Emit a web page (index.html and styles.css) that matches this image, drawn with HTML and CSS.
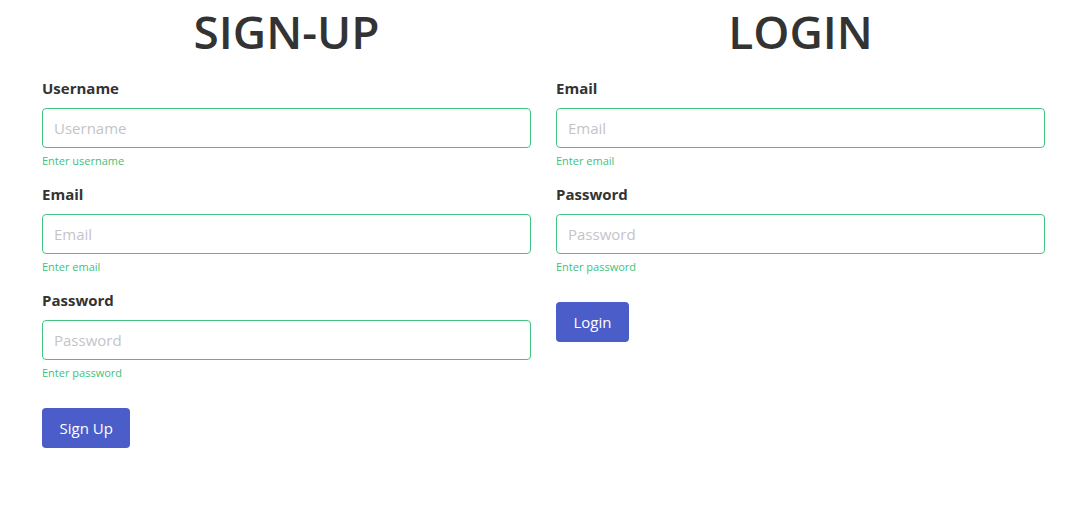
FILE: index.html
```html
<!DOCTYPE html>
<html lang="en">
<head>
<meta charset="utf-8">
<title>Sign-up / Login</title>
<link rel="stylesheet" href="styles.css">
</head>
<body>
<main class="page">
  <section class="panel">
    <h1 class="title">SIGN-UP</h1>
    <form class="form">
      <div class="group">
        <label class="label">Username</label>
        <input class="input" type="text" placeholder="Username">
        <div class="help">Enter username</div>
      </div>
      <div class="group">
        <label class="label">Email</label>
        <input class="input" type="email" placeholder="Email">
        <div class="help">Enter email</div>
      </div>
      <div class="group">
        <label class="label">Password</label>
        <input class="input" type="password" placeholder="Password">
        <div class="help">Enter password</div>
      </div>
      <button class="btn" type="button">Sign Up</button>
    </form>
  </section>
  <section class="panel">
    <h1 class="title">LOGIN</h1>
    <form class="form">
      <div class="group">
        <label class="label">Email</label>
        <input class="input" type="email" placeholder="Email">
        <div class="help">Enter email</div>
      </div>
      <div class="group">
        <label class="label">Password</label>
        <input class="input" type="password" placeholder="Password">
        <div class="help">Enter password</div>
      </div>
      <button class="btn" type="button">Login</button>
    </form>
  </section>
</main>
</body>
</html>
```
FILE: styles.css
```css
* { box-sizing: border-box; }
body {
  margin: 0;
  background: #fff;
  color: #333;
  font-family: "Open Sans", "Noto Sans", sans-serif;
}
.page {
  display: grid;
  grid-template-columns: 489px 489px;
  column-gap: 25px;
  padding-left: 42px;
}
.title {
  margin: 0;
  font-size: 46px;
  line-height: 62px;
  font-weight: 600;
  text-align: center;
  color: #333;
}
.form {
  display: flex;
  flex-direction: column;
  align-items: flex-start;
  padding-top: 14px;
}
.group {
  display: flex;
  flex-direction: column;
  width: 100%;
  margin-bottom: 12px;
}
.label {
  font-size: 15px;
  font-weight: 700;
  line-height: 24px;
  margin-bottom: 8px;
  color: #333;
}
.input {
  height: 40px;
  width: 100%;
  border: 1px solid #42c583;
  border-radius: 4px;
  padding: 0 11px;
  font-family: inherit;
  font-size: 15px;
  color: #333;
  outline: none;
}
.input::placeholder { color: #c4c4c8; }
.help {
  margin-top: 4px;
  font-size: 11px;
  line-height: 18px;
  color: #3fbf7c;
}
.btn {
  margin-top: 14px;
  height: 40px;
  padding: 0 17.5px;
  border: none;
  border-radius: 4px;
  background: #4a5dc8;
  color: #fff;
  font-family: inherit;
  font-size: 15px;
}
```
